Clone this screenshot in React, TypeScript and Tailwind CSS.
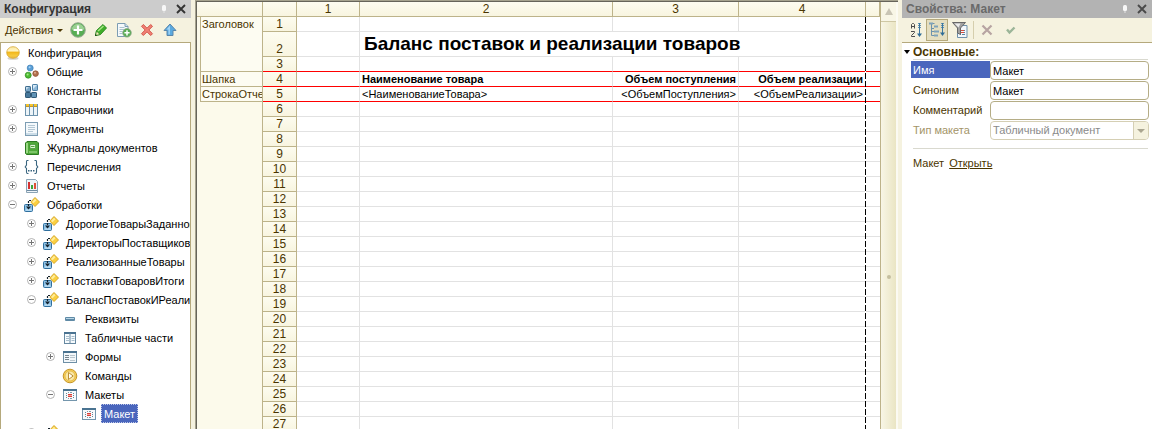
import { useState, type ReactNode } from 'react';

const Svg = ({ children }: { children: ReactNode }) => (
  <svg width="16" height="16" viewBox="0 0 16 16" className="block shrink-0" aria-hidden="true">
    {children}
  </svg>
);

const RootIcon = () => (
  <Svg>
    <defs>
      <linearGradient id="gold" x1="0" y1="0" x2="0" y2="1">
        <stop offset="0" stopColor="#fbe9a0" />
        <stop offset="0.35" stopColor="#fff3c0" />
        <stop offset="0.5" stopColor="#f2b81c" />
        <stop offset="0.75" stopColor="#f7c93a" />
        <stop offset="1" stopColor="#e8b83c" />
      </linearGradient>
    </defs>
    <ellipse cx="8" cy="13.2" rx="5.5" ry="1.5" fill="#d5d2c8" />
    <ellipse cx="8" cy="7.5" rx="6.3" ry="5.8" fill="url(#gold)" stroke="#d4a634" strokeWidth="0.8" />
  </Svg>
);

const CommonIcon = () => (
  <Svg>
    <circle cx="6.2" cy="4" r="3" fill="#5b9fd6" stroke="#3b7cb4" strokeWidth="0.7" />
    <circle cx="4.2" cy="11.2" r="3" fill="#4dbb33" stroke="#2b8a1d" strokeWidth="0.7" />
    <circle cx="11.6" cy="9.6" r="2.8" fill="#b3714f" stroke="#86492d" strokeWidth="0.7" />
    <circle cx="5.6" cy="3.2" r="1" fill="#a7d2f3" />
    <circle cx="3.6" cy="10.4" r="1" fill="#a3ea86" />
    <circle cx="11" cy="8.8" r="1" fill="#dfae94" />
  </Svg>
);

const ConstIcon = () => (
  <Svg>
    <rect x="1.5" y="3.5" width="5" height="5" rx="0.6" fill="#7aa6c6" stroke="#3f6c8d" />
    <rect x="1.5" y="9.5" width="5" height="5" rx="0.6" fill="#47789b" stroke="#2f5875" />
    <rect x="7.5" y="9.5" width="5" height="5" rx="0.6" fill="#6294b6" stroke="#2f5875" />
    <rect x="8.5" y="1.5" width="5" height="6" rx="0.6" fill="#8fb9d9" stroke="#4d80a6" />
    <path d="M9 2h4L9 6Z" fill="#d8ebf8" />
    <path d="M2 4h3L2 7Z" fill="#c5dcec" />
  </Svg>
);

const CatalogIcon = () => (
  <Svg>
    <rect x="1" y="2" width="13" height="12" fill="#6d93ad" />
    <path d="M2 5h3v8H2zM6 5h3v8H6zM10 5h3v8h-3z" fill="#edf4f8" />
    <path d="M2 2h3v3H2zM6 2h3v3H6zM10 2h3v3h-3z" fill="#f4c52f" />
    <path d="M2 4h3v1H2zM6 4h3v1H6zM10 4h3v1h-3z" fill="#c9961a" />
  </Svg>
);

const DocIcon = () => (
  <Svg>
    <rect x="1.5" y="1.5" width="12" height="13" fill="#f4f9fc" stroke="#7d9db3" />
    <path d="M4 4.5h7M4 6.5h7M4 8.5h7M4 10.5h5" stroke="#b4c7d4" />
    <path d="M2 12h11v2H2z" fill="#ccdde8" />
  </Svg>
);

const JournalIcon = () => (
  <Svg>
    <path d="M3 1.5h10l1.500 1.500v11.500h-12l-1-1V3Z" fill="#4fa83a" stroke="#2c7a22" />
    <path d="M2 3h2v10H2z" fill="#9ad884" />
    <rect x="6" y="4.500" width="5.500" height="4" fill="#def4d5" stroke="#348527" strokeWidth="0.6" />
    <path d="M7 6.500h3.500" stroke="#4fa83a" />
    <path d="M5 11h8v2H5z" fill="#7cc568" />
  </Svg>
);

const EnumIcon = () => (
  <Svg>
    <path d="M4.500 1.500H3Q2.500 1.500 2.500 2.500V6L1.200 8L2.500 9.500V13Q2.500 14.500 3.500 14.500H4.500M10.500 1.500H12Q12.500 1.500 12.500 2.500V6L13.800 8L12.500 9.500V13Q12.500 14.500 11.500 14.500H10.500" fill="none" stroke="#39647f" strokeWidth="1.100" />
    <path d="M4 11h1.500v1.500H4zM6.500 11H8v1.500H6.500zM9 11h1.500v1.500H9z" fill="#39647f" />
  </Svg>
);

const ReportIcon = () => (
  <Svg>
    <path d="M2.500 1.500h9l2 2v11h-11z" fill="#edf3f8" stroke="#8aa3b5" />
    <path d="M4 4h2v7H4z" fill="#d43131" />
    <path d="M7 7h2v4H7z" fill="#3da63a" />
    <path d="M10 5h2v6h-2z" fill="#e05038" />
    <path d="M3 12.500h10" fill="none" stroke="#6f8ca2" />
  </Svg>
);

const ProcIcon = () => (
  <Svg>
    <rect x="0.500" y="7.500" width="8" height="7" rx="1" fill="#8cc0e4" stroke="#2f6f9e" />
    <path d="M2 13h5.500" stroke="#d6edfb" />
    <path d="M4.500 12V3.500H8" fill="none" stroke="#15222c" strokeWidth="1.200" strokeDasharray="2 1" />
    <path d="M2 9.500h5L4.500 12.500Z" fill="#15222c" />
    <path d="M11 0.500L15.500 5L11 9.500L6.800 5Z" fill="#fbd040" stroke="#d19f1d" strokeWidth="0.900" />
    <path d="M11 1.800L12.500 3.300L9.500 6.300L8 5Z" fill="#ffed9b" />
  </Svg>
);

const AttrIcon = () => (
  <Svg>
    <rect x="3" y="6" width="10" height="4" rx="1" fill="#5f8aa6" />
    <rect x="4" y="7" width="8" height="1" fill="#b9d6e7" />
  </Svg>
);

const TabPartIcon = () => (
  <Svg>
    <rect x="2.500" y="2.500" width="11" height="11" fill="#f7fbfd" stroke="#6688a1" />
    <path d="M2 2h12v2H2z" fill="#4a7391" />
    <path d="M8 3v11" stroke="#6688a1" />
    <path d="M4 6.500h3M4 8.500h3M4 10.500h3M9.500 6.500h3M9.500 8.500h3M9.500 10.500h3" stroke="#a7bdcc" />
  </Svg>
);

const FormIcon = () => (
  <Svg>
    <rect x="1.500" y="2.500" width="13" height="11" fill="#f2f7fa" stroke="#6e8fa6" />
    <path d="M1 2h14v2H1z" fill="#4a7391" />
    <path d="M3 6.500h4M3 8.500h4M3 10.500h4" stroke="#75838d" />
    <path d="M8 6.500h5M8 8.500h5M8 11.500h5" stroke="#bac6ce" />
  </Svg>
);

const CommandIcon = () => (
  <Svg>
    <circle cx="8" cy="8" r="6.800" fill="#f6cf58" stroke="#c59529" />
    <circle cx="8" cy="8" r="5" fill="#fae8a8" stroke="#dfb23f" strokeWidth="0.800" />
    <path d="M6.500 4.500L11.200 8L6.500 11.500Z" fill="#fffdf3" stroke="#b48624" strokeWidth="0.900" />
  </Svg>
);

const LayoutIcon = () => (
  <Svg>
    <rect x="1.500" y="2.500" width="13" height="11" fill="#f7fbfd" stroke="#7496ad" />
    <path d="M1 2h14v2H1z" fill="#4a7391" />
    <path d="M4 6.500h1M4 8.500h1M4 10.500h1M11 6.500h1M11 8.500h1M11 10.500h1" stroke="#6d8190" />
    <path d="M6 5.500h1M8 5.500h2M6 11.500h1M8 11.500h2" stroke="#8597a4" />
    <path d="M6 7.500h4M6 9.500h4" stroke="#dc3f36" />
    <path d="M6 8.500h4" stroke="#f2a7a2" />
  </Svg>
);

const AddIcon = () => (
  <Svg>
    <circle cx="8" cy="8" r="7.300" fill="#58ad54" stroke="#9bab96" />
    <path d="M1.800 8A6.200 6.200 0 0 1 14.200 8Q8 5.500 1.800 8Z" fill="#9bd093" />
    <path d="M8 3.500v9M3.500 8h9" stroke="#fff" strokeWidth="2.200" />
  </Svg>
);

const EditIcon = () => (
  <Svg>
    <path d="M2.500 13.500L3.500 8.500L10 2.500L13.500 6L7.500 12.500Z" fill="#3fae28" stroke="#23831b" strokeWidth="0.900" />
    <path d="M5 9L10.500 4" stroke="#a5e684" strokeWidth="1.500" />
    <path d="M3.500 9L7 12.500L2.500 13.500Z" fill="#f3e9b8" stroke="#23831b" strokeWidth="0.700" />
    <path d="M2 14l0.500-2 1.500 1.500z" fill="#173d12" />
  </Svg>
);

const CopyIcon = () => (
  <Svg>
    <path d="M1.500 1.500h7.500l3 3v10h-10.500z" fill="#f5f9fb" stroke="#7c9db3" />
    <path d="M9 1.500v3h3" fill="#cfe0ea" stroke="#7c9db3" />
    <path d="M3.500 5.500h5M3.500 7.500h5M3.500 9.500h3M3.500 11.500h3" stroke="#acc2d0" />
    <circle cx="11" cy="10.800" r="4.300" fill="#59ad54" stroke="#8fa88b" strokeWidth="0.800" />
    <path d="M11 8.200v5.200M8.400 10.800h5.200" stroke="#fff" strokeWidth="1.500" />
  </Svg>
);

const DeleteIcon = () => (
  <Svg>
    <path d="M2.500 4.300L4.300 2.500L8 6.200L11.700 2.500L13.500 4.300L9.800 8L13.500 11.700L11.700 13.500L8 9.800L4.300 13.500L2.500 11.700L6.200 8Z" fill="#f08074" stroke="#d3564a" />
  </Svg>
);

const UpIcon = () => (
  <Svg>
    <path d="M8 2L14 8.500H11V13.500H5V8.500H2Z" fill="#5aa9df" stroke="#5a86ab" strokeLinejoin="round" />
    <path d="M8 3.500L4.500 7.500H6.500V12.500H7.800Z" fill="#a5d6f7" />
  </Svg>
);

const Pin = () => (
  <svg width="8" height="12" viewBox="0 0 8 12" className="block" aria-hidden="true">
    <rect x="2" y="2" width="4" height="6" rx="1.500" fill="#f7f7f7" />
    <path d="M4 8v2" stroke="#e4e4e4" />
  </svg>
);

const CloseX = ({ dark }: { dark?: boolean }) => (
  <svg width="10" height="10" viewBox="0 0 10 10" className="block" aria-hidden="true">
    <path d="M1 1L9 9M9 1L1 9" stroke={dark ? '#333333' : '#4a4a4a'} strokeWidth="1.900" />
  </svg>
);

const SortIcon = () => (
  <Svg>
    <path d="M1.500 6.500V2.500L2.500 1.500H3.500L4.500 2.500V6.500M1.500 4.500H4.500M1 9.500H4.500V10.500L1.500 13.500V14.500H5" fill="none" stroke="#4d4d4d" />
    <path d="M9.500 1v5" stroke="#5f92b4" strokeWidth="3" strokeDasharray="1 1" />
    <path d="M9.500 1v13" stroke="#3a76a0" />
    <path d="M7 11.500h5L9.500 15Z" fill="#2f6c96" />
  </Svg>
);

const CategoryIcon = () => (
  <Svg>
    <path d="M0.500 1.500h5M2.500 2v11.500H5M2.500 6.500H5M2.500 9.500H5" fill="none" stroke="#6c92ac" />
    <path d="M0 1.500h4M5 4.500h4M5 9.500h5M5 13.500h4" stroke="#7fa3ba" strokeWidth="2" />
    <path d="M13.500 1v5" stroke="#5f92b4" strokeWidth="3" strokeDasharray="1 1" />
    <path d="M13.500 1v12" stroke="#3a76a0" />
    <path d="M11 10.500h5L13.500 14Z" fill="#2f6c96" />
  </Svg>
);

const FilterIcon = () => (
  <Svg>
    <path d="M5.500 3.500h9.500v12H5.500Z" fill="#f3f7fb" stroke="#6f91ab" />
    <path d="M10 8.500h3M10 10.500h3M8 12.500h1M10 12.500h3" stroke="#5c84a0" />
    <path d="M9 8.500h3M9 10.500h3" stroke="#db4c3b" />
    <path d="M0.500 0.500h13L8.500 6v6.500l-3-1.500V6Z" fill="#a0a0a0" stroke="#686868" />
    <path d="M2.500 1.500h6L6.500 5.500Z" fill="#ececec" />
  </Svg>
);

type Node = { level: number; label: string; icon: () => ReactNode; sign?: '+' | '-' };

const nodes: Node[] = [
  { level: 0, label: 'Конфигурация', icon: RootIcon },
  { level: 1, label: 'Общие', icon: CommonIcon, sign: '+' },
  { level: 1, label: 'Константы', icon: ConstIcon },
  { level: 1, label: 'Справочники', icon: CatalogIcon, sign: '+' },
  { level: 1, label: 'Документы', icon: DocIcon, sign: '+' },
  { level: 1, label: 'Журналы документов', icon: JournalIcon },
  { level: 1, label: 'Перечисления', icon: EnumIcon, sign: '+' },
  { level: 1, label: 'Отчеты', icon: ReportIcon, sign: '+' },
  { level: 1, label: 'Обработки', icon: ProcIcon, sign: '-' },
  { level: 2, label: 'ДорогиеТоварыЗаданной', icon: ProcIcon, sign: '+' },
  { level: 2, label: 'ДиректорыПоставщиков', icon: ProcIcon, sign: '+' },
  { level: 2, label: 'РеализованныеТовары', icon: ProcIcon, sign: '+' },
  { level: 2, label: 'ПоставкиТоваровИтоги', icon: ProcIcon, sign: '+' },
  { level: 2, label: 'БалансПоставокИРеализации', icon: ProcIcon, sign: '-' },
  { level: 3, label: 'Реквизиты', icon: AttrIcon },
  { level: 3, label: 'Табличные части', icon: TabPartIcon },
  { level: 3, label: 'Формы', icon: FormIcon, sign: '+' },
  { level: 3, label: 'Команды', icon: CommandIcon },
  { level: 3, label: 'Макеты', icon: LayoutIcon, sign: '-' },
  { level: 4, label: 'Макет', icon: LayoutIcon },
  { level: 2, label: 'СведенияПоТоварам', icon: ProcIcon, sign: '+' },
];

const indents = ['pl-[5px]', 'pl-1', 'pl-[23px]', 'pl-[42px]', 'pl-[61px]'];

const Expander = ({ sign, label }: { sign: '+' | '-'; label: string }) => (
  <button type="button" aria-label={label}>
    <svg width="9" height="9" viewBox="0 0 9 9" className="block" aria-hidden="true">
      <circle cx="4.500" cy="4.500" r="4" fill="#fff" stroke="#a9a9a9" strokeWidth="0.900" />
      <path d={sign === '+' ? 'M2 4.500h5M4.500 2v5' : 'M2 4.500h5'} stroke="#757575" />
    </svg>
  </button>
);

const leftTools = [
  { label: 'Добавить', icon: AddIcon },
  { label: 'Изменить', icon: EditIcon },
  { label: 'Скопировать', icon: CopyIcon },
  { label: 'Удалить', icon: DeleteIcon },
  { label: 'Переместить вверх', icon: UpIcon },
];

function ConfigPanel() {
  const [selected, setSelected] = useState('Макет');
  return (
    <aside className="flex w-[191px] shrink-0 flex-col">
      <header className="flex h-[18px] shrink-0 items-center bg-[#cccccc] pr-[5px] pl-1">
        <h2 className="flex-1 text-xs font-bold text-[#333333]">Конфигурация</h2>
        <button type="button" aria-label="Закрепить" className="mr-2"><Pin /></button>
        <button type="button" aria-label="Закрыть"><CloseX dark /></button>
      </header>
      <div className="flex h-6 shrink-0 items-center pl-[5px]">
        <button type="button" className="mr-[7px] flex items-center gap-1 text-[#4a3500]">
          Действия
          <span className="border-x-[3px] border-t-[3px] border-x-transparent border-t-[#4a3500]" />
        </button>
        <div className="flex gap-[7px]">
          {leftTools.map(({ label, icon: Icon }) => (
            <button key={label} type="button" aria-label={label}><Icon /></button>
          ))}
        </div>
      </div>
      <ul className="min-h-0 flex-1 overflow-hidden border-x border-t border-[#b5a97c] bg-white">
        {nodes.map(({ level, label, icon: Icon, sign }) => (
          <li key={label} className={`-ml-px flex h-[19px] items-center ${indents[level]}`}>
            {level > 0 && (
              <span className="mr-[3px] flex w-[17px] shrink-0 justify-center">
                {sign && <Expander sign={sign} label={label} />}
              </span>
            )}
            <Icon />
            <button
              type="button"
              onClick={() => setSelected(label)}
              className={`ml-1 h-[19px] px-[3px] pt-px whitespace-nowrap ${
                selected === label
                  ? 'bg-[#4a66bd] text-white outline-1 -outline-offset-1 outline-dotted outline-[#c0c8e8]'
                  : 'text-black'
              }`}
            >
              {label}
            </button>
          </li>
        ))}
      </ul>
    </aside>
  );
}

const head = 'border-r border-b border-[#bdb38a] bg-linear-to-b from-[#fdfcf0] to-[#f8f5e0] p-0 text-center text-xs leading-[14px] font-normal text-[#4a3500]';
const nameCell = 'overflow-hidden border-r border-b border-[#bdb38a] bg-[#fdfcf2] p-0 pl-px text-left align-top leading-[14px] font-normal whitespace-nowrap text-[#4a3500]';

function Sheet() {
  const rows = Array.from({ length: 27 }, (_, i) => i + 1);
  return (
    <main className="ml-1 flex min-w-0 flex-1 border-t border-l border-[#a5a28e]">
      <div className="flex min-w-0 flex-1 overflow-hidden border-t border-l border-[#66645a]">
        <div className="relative min-w-0 flex-1 overflow-hidden bg-white">
          <table className="w-full table-fixed border-separate border-spacing-0 leading-[14px]">
            <colgroup>
              <col className="w-1" />
              <col className="w-[62px]" />
              <col className="w-[34px]" />
              <col className="w-[63px]" />
              <col className="w-[253px]" />
              <col className="w-[126px]" />
              <col className="w-[127px]" />
              <col />
            </colgroup>
            <thead>
              <tr className="h-[15px]">
                <td colSpan={2} className={head} />
                <td className={head} />
                <th scope="col" className={head}>1</th>
                <th scope="col" className={head}>2</th>
                <th scope="col" className={head}>3</th>
                <th scope="col" className={head}>4</th>
                <td className={head} />
              </tr>
            </thead>
            <tbody>
              {rows.map((n) => {
                const red = n >= 3 && n <= 5;
                const line = red ? 'border-b-[#ff0000]' : 'border-b-[#e2e2e2]';
                const cell = `border-r border-b border-r-[#e2e2e2] p-0 whitespace-nowrap ${line}`;
                return (
                  <tr key={n} className={n === 2 ? 'h-[25px]' : 'h-[15px]'}>
                    {n === 1 && <td rowSpan={5} className="border-r border-[#bdb38a] bg-[#fcfaeb] p-0" />}
                    {n === 1 && <th scope="rowgroup" rowSpan={3} className={nameCell}>Заголовок</th>}
                    {n === 4 && <th scope="rowgroup" className={nameCell}>Шапка</th>}
                    {n === 5 && <th scope="rowgroup" className={nameCell}>СтрокаОтчета</th>}
                    {n === 6 && <td colSpan={2} rowSpan={22} className="border-r border-[#bdb38a] bg-[#fcfaeb] p-0" />}
                    <th
                      scope="row"
                      className={`border-r border-b border-r-[#bdb38a] bg-linear-to-b from-[#fdfcf0] to-[#f8f5e0] p-0 text-center align-bottom text-xs leading-[14px] font-normal text-[#4a3500] ${red ? 'border-b-[#ff0000]' : 'border-b-[#bdb38a]'}`}
                    >
                      {n}
                    </th>
                    <td className={cell} />
                    {n === 2 ? (
                      <td colSpan={3} className={`${cell} pl-1 text-[19px] leading-6 font-bold`}>
                        Баланс поставок и реализации товаров
                      </td>
                    ) : (
                      <>
                        <td className={`${cell} pl-0.5 ${n === 4 ? 'font-bold' : ''}`}>
                          {n === 4 && 'Наименование товара'}
                          {n === 5 && '<НаименованиеТовара>'}
                        </td>
                        <td className={`${cell} pr-0.5 text-right ${n === 4 ? 'font-bold' : ''}`}>
                          {n === 4 && 'Объем поступления'}
                          {n === 5 && '<ОбъемПоступления>'}
                        </td>
                        <td className={`${cell} pr-0.5 text-right ${n === 4 ? 'font-bold' : ''}`}>
                          {n === 4 && 'Объем реализации'}
                          {n === 5 && '<ОбъемРеализации>'}
                        </td>
                      </>
                    )}
                    <td className={`border-b p-0 ${line}`} />
                  </tr>
                );
              })}
            </tbody>
          </table>
          <div className="absolute top-[15px] bottom-0 left-[668px] w-px bg-[repeating-linear-gradient(to_bottom,#000_0_6px,#fff_6px_8px)]" />
        </div>
        <div className="flex w-[18px] shrink-0 flex-col border-r-2 border-l border-r-[#fbfaf2] border-l-[#bdb38a] bg-linear-to-r from-[#f8f6e6] to-[#eae5c3]">
          <button type="button" aria-label="Прокрутить вверх" className="flex h-5 shrink-0 items-center justify-center border-b border-[#cfc8a4] bg-[#f8f6e6]">
            <span className="border-x-[4px] border-b-[7px] border-x-transparent border-b-[#c9c5b5]" />
          </button>
          <div className="flex flex-1 items-center justify-center pt-[102px]">
            <span className="size-1 rounded-full bg-[#c5bf9f]" />
          </div>
        </div>
      </div>
    </main>
  );
}

const rowLabel = 'flex h-[17px] w-[79px] shrink-0 items-center pt-px pl-0.5 whitespace-nowrap';
const field = 'h-[19px] w-full min-w-0 rounded-[4px] border border-[#b5ad86] bg-white px-0.5 text-black outline-none';

function Properties() {
  const [name, setName] = useState('Макет');
  const [synonym, setSynonym] = useState('Макет');
  const [comment, setComment] = useState('');
  return (
    <aside className="ml-1 flex w-[250px] shrink-0 flex-col">
      <header className="flex h-[18px] shrink-0 items-center bg-[#b3b3b3] pr-[5px] pl-1">
        <h2 className="flex-1 text-xs font-bold text-[#6a6a6a]">Свойства: Макет</h2>
        <button type="button" aria-label="Закрепить" className="mr-2"><Pin /></button>
        <button type="button" aria-label="Закрыть"><CloseX /></button>
      </header>
      <div className="flex h-[25px] shrink-0 items-center border-b border-[#b5a97c] pl-2">
        <button type="button" aria-label="Сортировать"><SortIcon /></button>
        <button type="button" aria-label="По категориям" className="mr-1 flex size-[22px] items-center justify-center border border-[#b5a97c] bg-[#e4dec0]">
          <CategoryIcon />
        </button>
        <button type="button" aria-label="Отбор"><FilterIcon /></button>
        <span className="mx-[5px] h-[18px] w-px bg-[#d5cead]" />
        <button type="button" aria-label="Отменить" disabled className="mr-2">
          <Svg><path d="M3.500 3.500L12.500 12.500M12.500 3.500L3.500 12.500" stroke="#b7a4a2" strokeWidth="2.200" /></Svg>
        </button>
        <button type="button" aria-label="Применить" disabled>
          <Svg><path d="M4 7.500L6.500 10.500L11.500 5.500" fill="none" stroke="#9bb598" strokeWidth="2.400" /></Svg>
        </button>
      </div>
      <div className="min-h-0 flex-1 bg-white pr-[3px] text-[#4a3500]">
        <h3 className="flex h-4 items-center pt-px text-xs font-bold">
          <span className="mr-[3px] ml-[2px] border-x-[3px] border-t-[4px] border-x-transparent border-t-black" />
          Основные:
        </h3>
        <div className="mr-px ml-[11px] border-t border-[#d9d9cf]" />
        <div className="mt-px ml-[9px] flex flex-col gap-px">
          <div className="flex">
            <label htmlFor="name" className={`${rowLabel} bg-[#4a66bd] text-white`}>Имя</label>
            <input id="name" value={name} onChange={(e) => setName(e.target.value)} className={field} />
          </div>
          <div className="flex">
            <label htmlFor="synonym" className={rowLabel}>Синоним</label>
            <input id="synonym" value={synonym} onChange={(e) => setSynonym(e.target.value)} className={field} />
          </div>
          <div className="flex">
            <label htmlFor="comment" className={rowLabel}>Комментарий</label>
            <input id="comment" value={comment} onChange={(e) => setComment(e.target.value)} className={field} />
          </div>
          <div className="flex">
            <label htmlFor="kind" className={`${rowLabel} text-[#a39468]`}>Тип макета</label>
            <div className="relative min-w-0 flex-1">
              <select id="kind" disabled className="block h-[19px] w-full appearance-none rounded-[4px] border border-[#d5cfb4] bg-white px-0.5 text-[#8a8a8a] opacity-100">
                <option>Табличный документ</option>
              </select>
              <span className="pointer-events-none absolute inset-y-px right-px flex w-[15px] items-center justify-center rounded-r-[3px] border-l border-[#d5cfb4] bg-[#f5f2df]">
                <span className="border-x-[4px] border-t-[4px] border-x-transparent border-t-[#aaa590]" />
              </span>
            </div>
          </div>
        </div>
        <div className="mt-2 mr-px ml-[11px] border-t border-[#d9d9cf] pt-2">
          Макет <a href="#open" className="ml-0.5 underline">Открыть</a>
        </div>
      </div>
    </aside>
  );
}

export default function App() {
  return (
    <div className="flex h-screen overflow-hidden bg-[#f5f2df] font-['Liberation_Sans',Arial,sans-serif] text-[11px] leading-[13px] text-black">
      <ConfigPanel />
      <Sheet />
      <Properties />
    </div>
  );
}
